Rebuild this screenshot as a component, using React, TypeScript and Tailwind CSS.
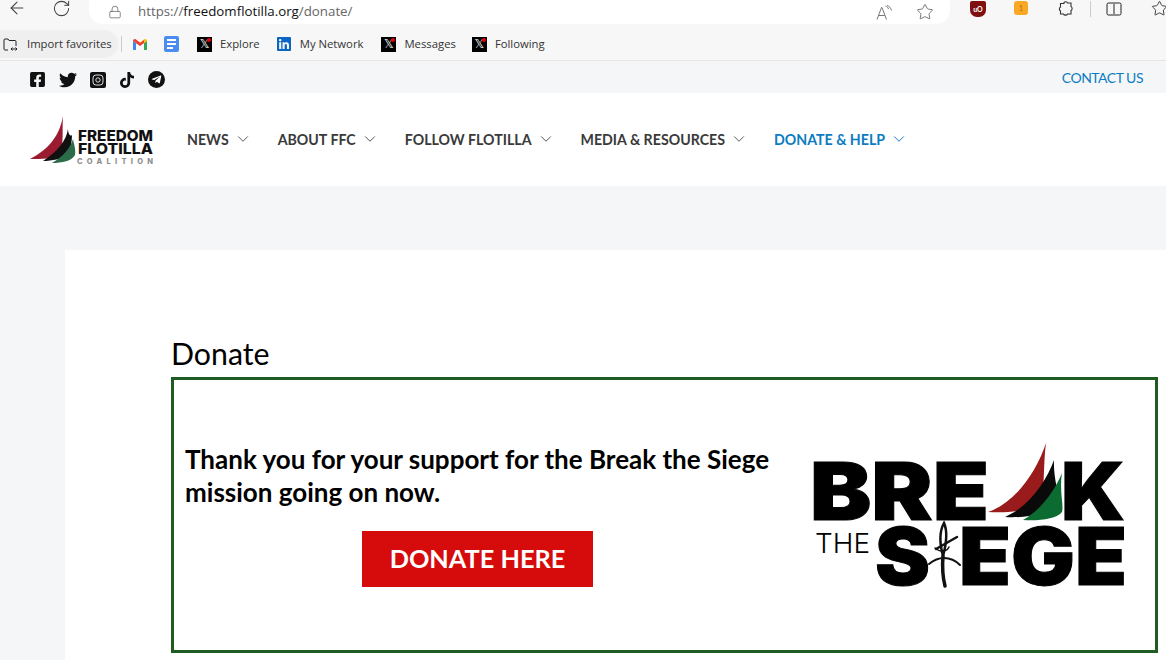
import React from 'react';
import { ArrowLeft, RotateCw, Lock, Star, ChevronDown } from 'lucide-react';
import { FaFacebookSquare, FaTwitter, FaTiktok, FaTelegramPlane, FaLinkedin } from 'react-icons/fa';

const NAV_ITEMS = ['NEWS', 'ABOUT FFC', 'FOLLOW FLOTILLA', 'MEDIA & RESOURCES'];

// favicon of the X bookmarks, with the red notification dot
const XFavicon = () => (
  <span className="relative flex h-[15px] w-[15px] shrink-0 items-center justify-center bg-black text-[12px] leading-none text-white font-['DejaVu_Sans']">
    𝕏
    <span className="absolute right-[1px] top-[1px] h-[4px] w-[4px] rounded-full bg-red-600" />
  </span>
);

const Bookmark = ({ label }: { label: string }) => (
  <div className="flex items-center gap-[8px]">
    <XFavicon />
    <span>{label}</span>
  </div>
);

const GmailIcon = () => (
  <svg width="14" height="11" viewBox="0 0 14 11">
    <path d="M0 2v8c0 .6.4 1 1 1h2V4z" fill="#4285f4" />
    <path d="M14 2v8c0 .6-.4 1-1 1h-2V4z" fill="#34a853" />
    <path d="M0 2c0-1.600 1.800-2.400 3-1.500L7 3.600v3L3 4 0 2z" fill="#ea4335" />
    <path d="M14 2c0-1.600-1.800-2.400-3-1.500L7 3.600v3L11 4l3-2z" fill="#fbbc04" />
    <path d="M3 1l4 3 4-3v3L7 7 3 4z" fill="#ea4335" />
  </svg>
);

const DocsIcon = () => (
  <span className="flex h-[16px] w-[15px] flex-col justify-center gap-[2px] rounded-[2px] bg-[#4a8cf0] px-[3px]">
    <span className="h-[2px] w-full bg-white" />
    <span className="h-[2px] w-full bg-white" />
    <span className="h-[2px] w-[6px] bg-white" />
  </span>
);

const InstagramIcon = () => (
  <svg width="16" height="16" viewBox="0 0 16 16">
    <rect width="16" height="16" rx="2" fill="#111" />
    <rect x="3" y="3" width="10" height="10" rx="3" fill="none" stroke="#ddd" strokeWidth="1" />
    <circle cx="8" cy="8" r="2.200" fill="none" stroke="#ddd" strokeWidth="1" />
  </svg>
);

const ReadAloudIcon = () => (
  <svg width="17" height="15" viewBox="0 0 17 15" fill="none" stroke="#777" strokeWidth="1">
    <path d="M1 14.500 5.500 2.500h.5L10.500 14.500M2.800 10.500h6" />
    <path d="M9.500 1c1.500.5 2.500 1.500 3 3M11 .5c2 .5 4 2.500 4.500 5" />
  </svg>
);

const FlotillaLogo = () => (
  <svg width="124" height="50" viewBox="30 116 124 50" className="shrink-0">
    <path d="M63 117C60 135 50 150 30 160C42 160 52 160 60 155C64 145 62 130 63 117Z" fill="#9b1c31" />
    <path d="M68 130C66 142 58 152 43 162C52 162 62 160 68 155C71 148 72 142 72 136C70 138 68 134 68 130Z" fill="#111" />
    <path d="M73 140C71 148 63 158 52 164C62 164 72 162 75 156C76 150 74 146 73 140Z" fill="#2b6b47" />
    <text x="78" y="141.500" fontFamily="Inter" fontWeight="800" fontSize="15" textLength="75" lengthAdjust="spacingAndGlyphs" fill="#111">FREEDOM</text>
    <text x="78" y="155" fontFamily="Inter" fontWeight="800" fontSize="15" textLength="75" lengthAdjust="spacingAndGlyphs" fill="#111">FLOTILLA</text>
    <text x="77" y="164.500" fontFamily="Inter" fontWeight="800" fontSize="7.500" textLength="76" fill="#8f8f8f">COALITION</text>
  </svg>
);

const BreakTheSiegeLogo = () => (
  <svg width="340" height="170" viewBox="800 430 340 170" className="shrink-0">
    <g fontFamily="Inter" fontWeight="900" fontSize="80" fill="#000" stroke="#000" strokeWidth="1">
      <text x="811" y="520" textLength="179" lengthAdjust="spacingAndGlyphs">BRE</text>
      <text x="1062" y="520" textLength="64" lengthAdjust="spacingAndGlyphs">K</text>
      <text x="876" y="585" textLength="55" lengthAdjust="spacingAndGlyphs">S</text>
      <text x="960" y="585" textLength="168" lengthAdjust="spacingAndGlyphs">EGE</text>
    </g>
    <text x="816" y="553" fontFamily="Inter" fontWeight="300" fontSize="27" textLength="55" lengthAdjust="spacingAndGlyphs" fill="#000">THE</text>
    <path d="M1047 443C1038 470 1018 502 989 512C1005 513 1025 512 1041 505C1046 495 1044 465 1047 443Z" fill="#991b1b" />
    <path d="M1055 460C1048 480 1030 507 1006 517C1022 518 1042 516 1058 506C1063 500 1054 482 1055 460Z" fill="#0a0a0a" />
    <path d="M1063 473C1056 490 1042 510 1024 520C1040 521 1058 519 1063 512C1065 505 1060 490 1063 473Z" fill="#0b6b31" />
    {/* barbed wire standing in for the I */}
    <g stroke="#111" fill="none" strokeLinecap="round">
      <path d="M945 523C940 532 941 545 944 556C947 545 949 532 945 523Z" strokeWidth="2.500" />
      <path d="M944 556C943 568 944 578 946 586" strokeWidth="3.500" />
      <path d="M937 549L958 537" strokeWidth="2.500" />
      <path d="M936 548C940 552 948 552 950 547" strokeWidth="1.500" />
      <path d="M930 564C936 559 940 558 945 558C950 558 956 560 961 565" strokeWidth="2" />
    </g>
  </svg>
);

export default function App() {
  return (
    <div className="h-[660px] w-[1166px] overflow-hidden bg-[#f5f6f8] font-['Lato',sans-serif]">
      {/* browser toolbar */}
      <div className="flex h-[28px] items-start bg-[#f7f7f7] text-[#444]">
        <ArrowLeft size={20} strokeWidth={1.300} className="ml-[7px] mt-[-2px] shrink-0" />
        <RotateCw size={19} strokeWidth={1.300} className="ml-[25px] mt-[-1px] shrink-0" />
        <div className="ml-[18px] flex h-[24px] w-[861px] shrink-0 items-center rounded-b-[14px] bg-white pl-[19px] pr-[16px]">
          <Lock size={14} strokeWidth={1.300} className="text-[#666]" />
          <span className="ml-[16px] font-['Open_Sans'] text-[13.300px] text-[#666]">
            https://<span className="text-[#111]">freedomflotilla.org</span>/donate/
          </span>
          <span className="ml-auto"><ReadAloudIcon /></span>
          <Star size={18} strokeWidth={1.200} className="ml-[23px] text-[#666]" />
        </div>
        <div className="ml-[20px] mt-[1px] flex h-[16px] w-[16px] shrink-0 items-center justify-center rounded-b-[7px] rounded-t-[2px] bg-[#800f0f] text-[7px] font-bold text-white">
          uO
        </div>
        <div className="ml-[28px] mt-[1px] flex h-[14px] w-[14px] shrink-0 items-center justify-center rounded-[3px] bg-[#f9a825] text-[7px] text-[#b36b00]">
          1
        </div>
        <svg width="16" height="16" viewBox="0 0 16 16" className="ml-[30px] mt-[1px] shrink-0" fill="none" stroke="#333" strokeWidth="1.100">
          <path d="M6 1.500c1-1 3-1 3.500.5h3.500v3.500c1.500.500 1.500 3.500 0 4v3.500H9.500c-.5 1.500-3.500 1.500-4 0H2.500V10C1 9.500 1 6.500 2.500 6V2.500H6z" />
        </svg>
        <span className="ml-[16px] mt-[1px] h-[16px] w-px shrink-0 bg-[#ccc]" />
        <svg width="16" height="14" viewBox="0 0 16 14" className="ml-[15px] mt-[2px] shrink-0" fill="none" stroke="#222" strokeWidth="1">
          <path d="M7 1H2.500A1.500 1.500 0 0 0 1 2.500v9A1.500 1.500 0 0 0 2.500 13H7M9 1h4.500A1.500 1.500 0 0 1 15 2.500v9a1.500 1.500 0 0 1-1.500 1.500H9M8 0v14" />
        </svg>
        <Star size={17} strokeWidth={1.200} className="ml-[29px] shrink-0 text-[#222]" />
      </div>

      {/* bookmarks bar */}
      <div className="flex h-[33px] items-center border-b border-[#e6e6e6] bg-[#f7f7f7] font-['Open_Sans'] text-[11.300px] text-[#333]">
        <div className="flex h-[28px] w-[118px] shrink-0 items-center gap-[9px] rounded-r-[14px] bg-[#efefef] pl-[3px]">
          <svg width="15" height="15" viewBox="0 0 15 15" fill="none" stroke="#222" strokeWidth="1">
            <path d="M1 12V3c0-.6.4-1 1-1h3l1 1.500h6c.6 0 1 .4 1 1V9M1 12c0 .6.4 1 1 1h3M8 12h6M9.500 10.500 8 12l1.500 1.500M12.500 10.500 14 12l-1.500 1.500" />
          </svg>
          <span>Import favorites</span>
        </div>
        <span className="ml-[3px] h-[16px] w-px shrink-0 bg-[#ccc]" />
        <div className="ml-[11px] flex items-center">
          <GmailIcon />
          <span className="ml-[17px]"><DocsIcon /></span>
          <div className="ml-[17px] pl-px"><Bookmark label="Explore" /></div>
          <div className="ml-[16px] flex items-center gap-[8px]">
            <FaLinkedin size={16} className="text-[#0a66c2]" />
            <span>My Network</span>
          </div>
          <div className="ml-[18px]"><Bookmark label="Messages" /></div>
          <div className="ml-[16px]"><Bookmark label="Following" /></div>
        </div>
      </div>

      {/* site top bar */}
      <div className="flex h-[32px] items-center pl-[29px] pr-[23px]">
        <div className="mt-[5px] flex items-center gap-[13px] text-[#111]">
          <FaFacebookSquare size={17} className="h-[17px] w-[17px]" />
          <FaTwitter size={18} />
          <InstagramIcon />
          <FaTiktok size={16} />
          <span className="flex h-[17px] w-[17px] items-center justify-center rounded-full bg-[#111] text-white">
            <FaTelegramPlane size={11} />
          </span>
        </div>
        <a className="ml-auto text-[14px] tracking-[-0.5px] text-[#0b7cc2]">CONTACT US</a>
      </div>

      {/* site header */}
      <header className="flex h-[93px] items-center bg-white pl-[30px]">
        <FlotillaLogo />
        <nav className="ml-[33px] flex items-center gap-[26px] text-[14.200px] font-bold text-[#3a3a3a]">
          {NAV_ITEMS.map((item) => (
            <div key={item} className="flex items-center gap-[5px]">
              <span>{item}</span>
              <ChevronDown size={18} strokeWidth={1.300} className="text-[#555]" />
            </div>
          ))}
          <div className="flex items-center gap-[5px] text-[#0b7cc2]">
            <span>DONATE &amp; HELP</span>
            <ChevronDown size={18} strokeWidth={1.300} />
          </div>
        </nav>
      </header>

      {/* page content */}
      <main className="ml-[65px] mt-[64px] h-[500px] bg-white pl-[106px] pr-[8px] pt-[85px]">
        <h1 className="text-[30.300px] leading-[36px] text-black">Donate</h1>
        <div className="mt-[6px] flex h-[276px] items-center border-[3px] border-[#1f5c22] pl-[11px]">
          <div className="w-[585px] shrink-0">
            <p className="text-[26px] font-bold leading-[33px] text-black">
              Thank you for your support for the Break the Siege mission going on now.
            </p>
            <div className="mt-[22px] flex justify-center">
              <a className="flex h-[56px] w-[231px] items-center justify-center bg-[#d60b0b] text-[25.300px] font-bold text-white">
                DONATE HERE
              </a>
            </div>
          </div>
          <div className="ml-[29px]">
            <BreakTheSiegeLogo />
          </div>
        </div>
      </main>
    </div>
  );
}
